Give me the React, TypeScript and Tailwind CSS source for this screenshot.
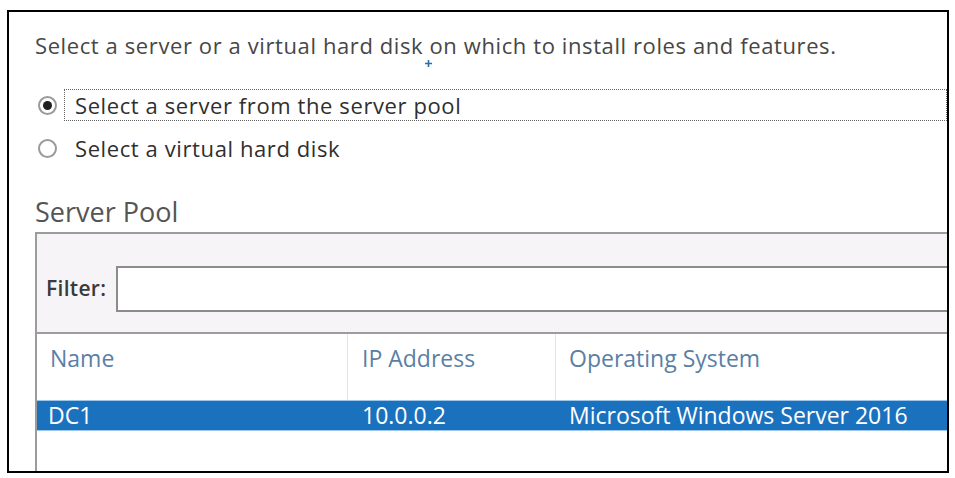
export default function App() {
  return (
    <div className="w-[955px] h-[478px] bg-white pt-[10px] pl-[7px] font-['Open_Sans',sans-serif]">
      <div className="relative w-[942px] h-[463px] border-2 border-black overflow-hidden bg-white">
        <div className="pl-[26px] pt-[18px] text-[22px] tracking-[0.6px] text-[#474747] leading-[30px] whitespace-nowrap">
          Select a server or a virtual hard disk on which to install roles and features.
        </div>
        <svg className="absolute left-[416px] top-[48px]" width="7" height="7" viewBox="0 0 7 7">
          <path d="M3.5 0v7M0 3.5h7" stroke="#2a6fa8" strokeWidth="1.6" />
        </svg>

        <div className="mt-[29px] pl-[29px] flex items-center h-[32px]">
          <span className="w-[19px] h-[19px] rounded-full border-2 border-[#9a9a9a] flex items-center justify-center">
            <span className="w-[9px] h-[9px] rounded-full bg-[#1f1f1f]" />
          </span>
          <div className="ml-[7px] flex-1 h-[32px] border border-dotted border-[#666] flex items-center pl-[10px] text-[22px] tracking-[0.6px] text-[#2f2f2f] whitespace-nowrap">
            Select a server from the server pool
          </div>
        </div>
        <div className="mt-[11px] pl-[29px] flex items-center h-[32px]">
          <span className="w-[19px] h-[19px] rounded-full border-2 border-[#9a9a9a]" />
          <div className="ml-[18px] text-[22px] tracking-[0.6px] text-[#2f2f2f] whitespace-nowrap">Select a virtual hard disk</div>
        </div>

        <div className="mt-[31px] pl-[26px] text-[27px] text-[#555] leading-[34px]">Server Pool</div>

        <div className="ml-[26px] mt-[3px] w-[1000px] border-l-2 border-t-2 border-[#9c9c9c]">
          <div className="h-[100px] bg-[#f6f4f7] flex items-start pt-[32px] pl-[9px] border-b-2 border-[#9c9c9c]">
            <span className="h-[46px] flex items-center text-[21px] font-semibold tracking-[0.3px] text-[#3a3a3a]">Filter:</span>
            <div className="ml-[10px] flex-1 h-[46px] bg-white border-2 border-[#8c8c8c]" />
          </div>
          <div className="flex h-[66px] bg-white text-[23px] text-[#5a7fa6] leading-[30px]">
            <div className="w-[311px] pl-[13px] pt-[9px] border-r border-[#e4e4e4]">Name</div>
            <div className="w-[208px] pl-[14px] pt-[9px] border-r border-[#e4e4e4]">IP Address</div>
            <div className="flex-1 pl-[13px] pt-[9px]">Operating System</div>
          </div>
          <div className="flex h-[31px] items-center bg-[#1a72bf] text-[23px] font-medium text-white border-y border-[#9dc7ea]">
            <div className="w-[311px] pl-[11px]">DC1</div>
            <div className="w-[208px] pl-[14px]">10.0.0.2</div>
            <div className="flex-1 pl-[13px]">Microsoft Windows Server 2016</div>
          </div>
          <div className="h-[60px] bg-white" />
        </div>
      </div>
    </div>
  )
}
